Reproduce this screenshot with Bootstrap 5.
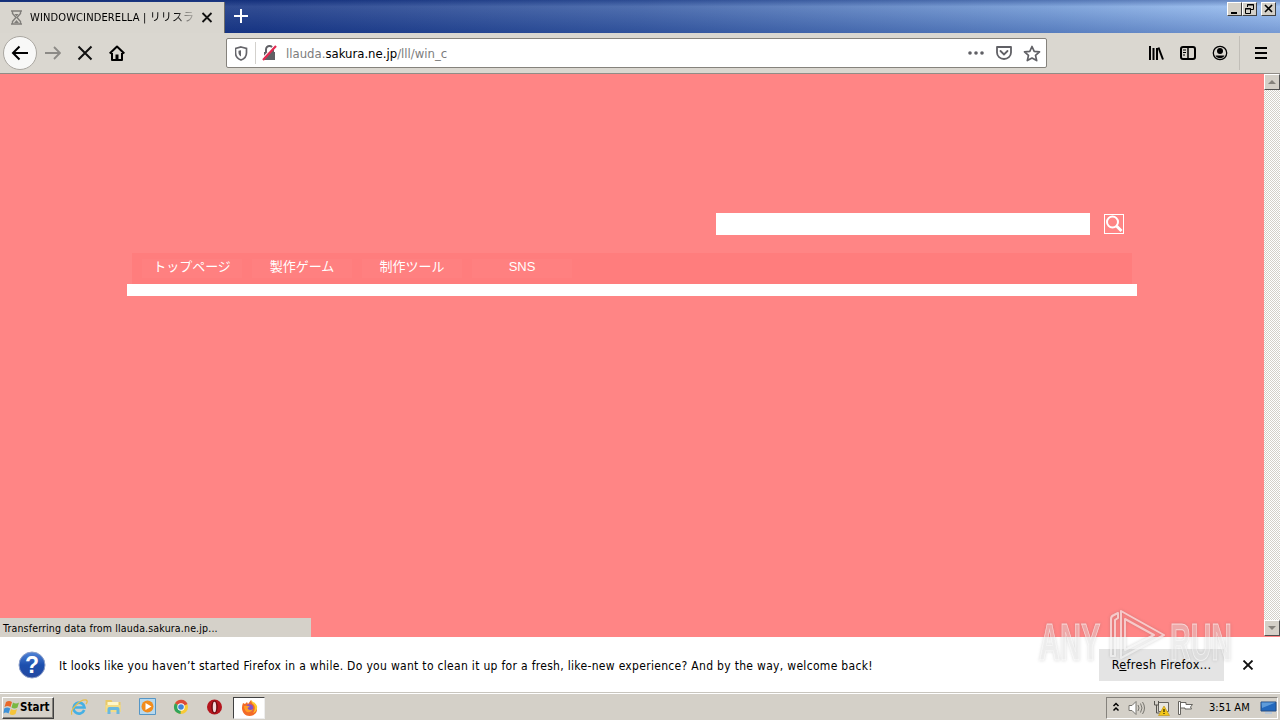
<!DOCTYPE html>
<html lang="ja">
<head>
    <meta charset="UTF-8">
    <title>WINDOWCINDERELLA</title>
    <meta name="viewport" content="width=device-width, initial-scale=1.0">
    <link href="https://cdn.jsdelivr.net/npm/bootstrap@5.3.0/dist/css/bootstrap.min.css" rel="stylesheet">
    <style>
        body {
            width: 1280px;
            height: 720px;
            overflow: hidden;
            font-family: "DejaVu Sans Condensed", "DejaVu Sans", "Noto Sans CJK JP", sans-serif;
            font-size: 12px;
            line-height: 1;
            color: #000;
            background: #d6d2ca;
        }

        svg {
            display: block;
            flex: none;
        }

        .text-line {
            white-space: nowrap;
            flex: none;
        }

        /* title bar */
        .title-strip {
            height: 33px;
            padding-top: 2px;
            background: linear-gradient(180deg, rgba(8, 30, 100, .3) 0, rgba(255, 255, 255, .1) 20%, rgba(10, 40, 120, .25) 100%), linear-gradient(90deg, #163480 0, #1a3886 20%, #3c5fa6 50%, #7199d5 82%, #9bc0f2 100%);
        }

        .browser-tab {
            width: 225px;
            height: 31px;
            padding-left: 10px;
            background: #d9d6cf;
            border-right: 1px solid #706e6a;
        }

        .tab-title {
            width: 167px;
            margin-left: 7px;
            font-size: 11px;
            letter-spacing: .13px;
            line-height: 16px;
            overflow: hidden;
            -webkit-mask-image: linear-gradient(90deg, #000 145px, transparent 168px);
            mask-image: linear-gradient(90deg, #000 145px, transparent 168px);
        }

        .win-btn {
            width: 15px;
            height: 14px;
            background: #d4d0c8;
            border: 1px solid;
            border-color: #fff #404040 #404040 #fff;
        }

        /* toolbar */
        .tool-strip {
            height: 41px;
            background: #dad7d0;
            border-bottom: 1px solid #908c86;
        }

        .back-btn {
            width: 34px;
            height: 34px;
            margin-left: 3px;
            border: 1px solid #aaa7a1;
            border-radius: 50%;
            background: #f8f8f7;
        }

        .url-box {
            width: 821px;
            height: 30px;
            margin-left: 101px;
            background: #fff;
            border: 1px solid #85827c;
            border-radius: 2px;
        }

        .url-sep {
            width: 1px;
            height: 22px;
            margin-left: 7px;
            background: #d3d1cd;
        }

        .url-text {
            margin-left: 6px;
            font-size: 13px;
            color: #7c7c7c;
        }

        .url-text b {
            font-weight: normal;
            color: #000;
        }

        .menu-sep {
            width: 1px;
            height: 34px;
            margin: 0 15px 0 11px;
            background: #c1beb8;
        }

        .menu-icon {
            margin-right: 13px;
        }

        /* page */
        .site {
            height: 563px;
            padding-bottom: 1px;
            background: #ff8585;
        }

        .site-inner {
            width: 1010px;
            padding-top: 139px;
        }

        .search-field {
            width: 374px;
            height: 22px;
            background: #fff;
        }

        .search-go {
            width: 20px;
            height: 20px;
            margin: 0 13px 0 14px;
            border: 1px solid #fff;
        }

        .site-menu {
            height: 31px;
            margin: 18px 5px 0;
            padding: 6px 10px 6px;
            gap: 10px;
            background: #ff7d7d;
        }

        .site-menu a {
            width: 100px;
            color: #fff;
            font-family: "Liberation Sans", "Noto Sans CJK JP", sans-serif;
            font-size: 13px;
            line-height: 15px;
            text-align: center;
            text-decoration: none;
            background: #ff8080;
        }

        .white-band {
            height: 12px;
            background: #fff;
        }

        .scroll-track {
            width: 16px;
            background: repeating-conic-gradient(#fff 0 25%, #d4d0c8 0 50%) 0 0 / 2px 2px;
        }

        .scroll-btn {
            width: 16px;
            height: 16px;
            background: #d4d0c8;
            border: 1px solid;
            border-color: #fff #505050 #505050 #fff;
        }

        .load-status {
            width: 311px;
            height: 19px;
            padding: 1px 0 0 3px;
            font-size: 10.5px;
            letter-spacing: .17px;
            background: #d5d1c9;
        }

        /* notification */
        .notice {
            height: 55px;
            padding: 0 24px 0 18px;
            background: #fff;
        }

        .notice-text {
            margin-left: 13px;
            padding-top: 2px;
            letter-spacing: .308px;
        }

        .notice-btn {
            width: 125px;
            height: 32px;
            padding-top: 1px;
            background: #e4e4e4;
            font-size: 12.5px;
            letter-spacing: .33px;
        }

        /* taskbar */
        .task-strip {
            height: 28px;
            border-top: 1px solid #c8c5be;
            background: linear-gradient(#fff 0 1px, #d4d0c8 1px);
        }

        .start-btn {
            width: 52px;
            height: 22px;
            margin: 2px 1px 0 2px;
            border: 1px solid;
            border-color: #fff #404040 #404040 #fff;
            box-shadow: inset -1px -1px #85827c;
            font-size: 11.5px;
            font-weight: bold;
        }

        .active-task {
            width: 32px;
            height: 22px;
            margin: 2px 0 0 10px;
            background: #fff;
            border: 1px solid;
            border-color: #404040 #eee #eee #404040;
        }

        .tray {
            width: 172px;
            height: 22px;
            margin: 2px 2px 0 0;
            padding-left: 5px;
            border: 1px solid;
            border-color: #85827c #fff #fff #85827c;
        }

        .tray-clock {
            margin-left: 14px;
            font-size: 11px;
        }

        .watermark {
            right: 40px;
            bottom: 50px;
            pointer-events: none;
            filter: drop-shadow(0 0 1.5px rgba(70, 70, 70, .4));
        }
    </style>
</head>
<body class="d-flex flex-column position-relative">
    <header class="title-strip d-flex">
        <div class="browser-tab d-flex align-items-center">
            <svg width="13" height="15" viewBox="0 0 13 15" fill="none" stroke="#807e7a" stroke-width="1.4">
                <path d="M1 1h11M1 14h11M2.500 1v2.500L6 7.500 2.500 11.500V14M10.500 1v2.500L7 7.500l3.500 4V14"/>
                <path d="M4.500 4h4L6.500 6.500zM4 13l2.500-3L9 13z" fill="#807e7a" stroke="none"/>
            </svg>
            <div class="tab-title text-line">WINDOWCINDERELLA | リリスラ</div>
            <svg class="ms-1" width="12" height="12" viewBox="0 0 12 12" stroke="#111" stroke-width="1.8"><path d="M1.500 1l9 9M10.500 1l-9 9"/></svg>
        </div>
        <svg class="mt-1 ms-2" width="16" height="18" viewBox="0 0 16 18" stroke="#fff" stroke-width="2"><path d="M8 3v14M1 10h14"/></svg>
        <div class="d-flex ms-auto me-1">
            <div class="win-btn"><svg width="13" height="12"><path d="M3 9h6v2H3z"/></svg></div>
            <div class="win-btn"><svg width="13" height="12" fill="none" stroke="#000"><path d="M4.500 4V1.500h6v5H8M4 2h7M2.500 5.500h5v5h-5zM2 6h6"/></svg></div>
            <div class="win-btn ms-1"><svg width="13" height="12" stroke="#000" stroke-width="1.600"><path d="M3 2l7 7M10 2L3 9"/></svg></div>
        </div>
    </header>

    <nav class="tool-strip d-flex align-items-center">
        <div class="back-btn d-flex align-items-center justify-content-center">
            <svg width="18" height="16" viewBox="0 0 18 16" fill="none" stroke="#000" stroke-width="2"><path d="M17 8H2M8.500 1.500L2 8l6.500 6.500"/></svg>
        </div>
        <svg class="ms-2" width="16" height="16" viewBox="0 0 16 16" fill="none" stroke="#8c8a86" stroke-width="1.800"><path d="M0 8h15M9 2l6 6-6 6"/></svg>
        <svg class="ms-3" width="16" height="16" viewBox="0 0 16 16" stroke="#111" stroke-width="2"><path d="M1.500 1.500l13 13M14.500 1.500l-13 13"/></svg>
        <svg class="ms-3" width="16" height="17" viewBox="0 0 16 17" fill="none" stroke="#000" stroke-width="2"><path d="M.7 8.500L8 1.500l7.300 7M3 8v7h10V8" stroke-linejoin="round"/><path d="M8 15V9.500" stroke-width="3"/></svg>
        <div class="url-box d-flex align-items-center">
            <svg class="ms-2" width="13" height="15" viewBox="0.5 0 13 15" fill="none" stroke="#65656a" stroke-width="1.700"><path d="M6.500 1L12 2.500v4.200c0 3.500-2 6-5.500 7.300C3 12.700 1 10.200 1 6.700V2.500z"/><path d="M6.500 4.200v6.300C4.800 9.500 4 8.200 4 6.500V4.800z" fill="#65656a" stroke="none"/></svg>
            <div class="url-sep"></div>
            <svg class="ms-1" width="20" height="18" viewBox="0 0 20 18" fill="none"><path d="M4 8h11v8H4z" fill="#606065"/><path d="M6 8V5.500a3.500 3.500 0 017 0V8" stroke="#606065" stroke-width="2"/><path d="M2 15L15 1" stroke="#fff" stroke-width="1.500"/><path d="M3 16L16 2" stroke="#e22850" stroke-width="2.200"/></svg>
            <div class="url-text text-line">llauda.<b>sakura.ne.jp</b>/lll/win_c</div>
            <svg class="ms-auto" width="16" height="4" fill="#606065"><circle cx="2" cy="2" r="1.800"/><circle cx="8" cy="2" r="1.800"/><circle cx="14" cy="2" r="1.800"/></svg>
            <svg class="ms-2 me-1" width="24" height="14" viewBox="-4 0 24 14" fill="none" stroke="#606065" stroke-width="1.800"><path d="M1 1h14v5.500a7 6.500 0 01-14 0z" stroke-linejoin="round"/><path d="M4.500 5L8 8.500 11.500 5" stroke-linecap="round"/></svg>
            <svg class="me-1" width="22" height="17" viewBox="-3 0 22 17" fill="none" stroke="#606065" stroke-width="1.700" stroke-linejoin="round"><path d="M9 1.500l2.200 4.800 5.300.6-4 3.500 1.200 5.200L9 13l-4.700 2.600 1.200-5.200-4-3.500 5.300-.6z"/></svg>
        </div>
        <div class="d-flex align-items-center ms-auto">
            <svg width="16" height="15" viewBox="0 0 16 15" stroke="#000" stroke-width="2"><path d="M2 0v14M5.500 2v12M9 2v12" /><path d="M10.500 1.500l4.500 12"/></svg>
            <svg class="ms-3" width="16" height="14" viewBox="0 0 16 14" fill="none" stroke="#000" stroke-width="2"><rect x="1" y="1" width="14" height="12" rx="2"/><path d="M8 1v12" stroke-width="1.500"/><path d="M3 4h3M3 6.500h3M3 9h2" stroke-width="1"/></svg>
            <svg class="ms-3" width="16" height="16" viewBox="0 0 16 16"><circle cx="8" cy="8" r="6.700" fill="none" stroke="#000" stroke-width="1.300"/><circle cx="8" cy="6" r="3"/><path d="M3.500 10.500h9C11 14 5 14 3.500 10.500z"/></svg>
            <div class="menu-sep"></div>
            <svg class="menu-icon" width="12" height="12" viewBox="0 0 12 12" stroke="#000" stroke-width="2"><path d="M0 1h12M0 6h12M0 11h12"/></svg>
        </div>
    </nav>

    <main class="site d-flex position-relative">
        <div class="flex-grow-1">
            <div class="site-inner mx-auto">
                <div class="d-flex justify-content-end align-items-center">
                    <div class="search-field"></div>
                    <div class="search-go"><svg width="18" height="18" viewBox="0 0 18 18" fill="none" stroke="#fff"><circle cx="7.500" cy="7" r="5.500" stroke-width="2"/><path d="M11.500 11l5 5" stroke-width="3"/></svg></div>
                </div>
                <div class="site-menu d-flex">
                    <a href="#">トップページ</a>
                    <a href="#">製作ゲーム</a>
                    <a href="#">制作ツール</a>
                    <a href="#">SNS</a>
                </div>
                <div class="white-band"></div>
            </div>
        </div>
        <div class="scroll-track d-flex flex-column justify-content-between">
            <div class="scroll-btn"><svg width="14" height="14" fill="#85827c"><path d="M3 9l4-4 4 4z"/></svg></div>
            <div class="scroll-btn"><svg width="14" height="14" fill="#85827c"><path d="M3 5l4 4 4-4z"/></svg></div>
        </div>
        <div class="load-status position-absolute bottom-0 start-0 d-flex align-items-center"><span class="text-line">Transferring data from llauda.sakura.ne.jp...</span></div>
    </main>

    <section class="notice d-flex align-items-center">
        <svg width="28" height="28" viewBox="0 0 28 28">
            <defs><linearGradient id="helpBlue" x2="0" y2="1"><stop stop-color="#5285d8"/><stop offset=".5" stop-color="#1c4fae"/><stop offset="1" stop-color="#2448a0"/></linearGradient></defs>
            <circle cx="14" cy="14" r="13" fill="url(#helpBlue)" stroke="#8c9ec8"/>
            <text x="14" y="22" text-anchor="middle" fill="#fff" font-family="Liberation Sans" font-weight="bold" font-size="23">?</text>
        </svg>
        <span class="notice-text text-line">It looks like you haven’t started Firefox in a while. Do you want to clean it up for a fresh, like-new experience? And by the way, welcome back!</span>
        <div class="notice-btn d-flex align-items-center justify-content-center ms-auto"><span class="text-line">R<u>e</u>fresh Firefox...</span></div>
        <svg class="ms-3" width="16" height="10" viewBox="-3 0 16 10" stroke="#111" stroke-width="1.800"><path d="M.5.5l9 9M9.500.5l-9 9"/></svg>
    </section>

    <footer class="task-strip d-flex align-items-center">
        <div class="start-btn d-flex align-items-center">
            <svg width="17" height="16" viewBox="0 0 17 16"><path d="M3 2q3-2 6 0L7.500 7q-3-2-6 0z" fill="#e8692a"/><path d="M10 2.500q3 2 6 0L14.500 7.500q-3 2-6 0z" fill="#79b843"/><path d="M1.200 8.500q3-2 6 0L5.500 13.500q-3-2-5 0z" fill="#3e92d8"/><path d="M8 9q3 2 6 0l-1.500 5q-3 2-6 0z" fill="#f5c43a"/></svg>
            <span class="text-line">Start</span>
        </div>
        <!-- Internet Explorer -->
        <svg class="ms-3" width="18" height="18" viewBox="1 0 18 18" fill="none"><path d="M14.200 12A5.500 5.500 0 1114.500 9.500H5" stroke="#45b0e4" stroke-width="2.600"/><path d="M2 16.500C-1 13 10 1 16 2c2 .5 1 3 0 4" stroke="#e5bd4c" stroke-width="1.300"/></svg>
        <!-- Explorer -->
        <svg class="ms-3" width="18" height="17" viewBox="0.5 0 18 17"><path d="M1 2h6l1 2h8v10H1z" fill="#e9c967"/><path d="M3 4h11v4H3z" fill="#fff7c8"/><path d="M1 7h15v7H1z" fill="#f3dc86"/><path d="M3 16v-5q0-2 2-2h8q2 0 2 2v5h-3v-4H6v4z" fill="#69b8df"/></svg>
        <!-- Media player -->
        <svg class="ms-3" width="17" height="17" viewBox="0 0 17 17"><path d="M.5.500h16v16H.5z" fill="#b7d8ed" stroke="#5596c6"/><circle cx="8.500" cy="8.500" r="6" fill="#f28c1c"/><path d="M6.500 5l6 3.500-6 3.500z" fill="#fff"/></svg>
        <!-- Chrome -->
        <svg class="ms-3" width="17" height="16" viewBox="-1 0 17 16"><circle cx="8" cy="8" r="7" fill="#f8ca36"/><path d="M8 8L2 4.300A7 7 0 0114.500 5z" fill="#dd4b39"/><path d="M8 8L2 4.300A7 7 0 007.500 15z" fill="#31a45b"/><circle cx="8" cy="8" r="3.700" fill="#fff"/><circle cx="8" cy="8" r="2.800" fill="#4285d8"/></svg>
        <!-- Opera -->
        <svg class="ms-3" width="18" height="16" viewBox="-1.5 0 18 16"><circle cx="8" cy="8" r="7.500" fill="#b5151d"/><ellipse cx="8" cy="8" rx="3.200" ry="6.500" fill="#6d0c11"/><ellipse cx="8" cy="8" rx="1.700" ry="5.300" fill="#f3dada"/></svg>
        <!-- Firefox -->
        <div class="active-task d-flex align-items-center justify-content-center">
            <svg width="17" height="17" viewBox="0 0 17 17"><path d="M2 4l2 1 2-2 1 2 3-4q1 3 4 5c5 5 0 11-5.500 11S-1 11 2 4z" fill="#f36b27"/><path d="M10 1q0 3 3 5 2 4-1 8 5-2 4-7-1-3-4-4z" fill="#ffc72b"/><circle cx="8.500" cy="9" r="3.700" fill="#8352c9"/><path d="M3 7q4-1 6 1-3 0-2 2 2 2 5 0-2 4-6 3-3-2-3-6z" fill="#ff9d26"/></svg>
        </div>
        <div class="tray d-flex align-items-center ms-auto">
            <svg width="8" height="12" viewBox="0 1 8 12" fill="none" stroke="#000" stroke-width="1.500"><path d="M1.500 5L4 2.500 6.500 5M1.500 9.500L4 7l2.500 2.500"/></svg>
            <svg class="ms-2" width="18" height="16" viewBox="0 0 18 16" fill="#fff" stroke="#77756f"><path d="M1 5.500h3L8 1.500v13l-4-4H1z"/><path d="M10 5q2 3 0 6M12.500 3.500q3 4.500 0 9M14.500 2q4 6 0 12" fill="none"/></svg>
            <svg class="ms-2" width="17" height="16" viewBox="1 0 17 16"><path d="M5.500 2.500h10v9h-10z" fill="#e8e6df" stroke="#66645f"/><path d="M1.500 1v4h4V1M3.500 5v8h3" fill="none" stroke="#55534e"/><path d="M11 6l5.500 9.500h-11z" fill="#f3c719" stroke="#b88d10" stroke-width=".6"/><path d="M10.500 9h1v3h-1zM10.500 13h1v1h-1z"/></svg>
            <svg class="ms-2" width="16" height="16" viewBox="2 0 16 16" overflow="visible" fill="#fff" stroke="#66645f"><path d="M1.500 1.500h2v13h-2zM3.500 2.500H9v2h6.500l-2 2.500 1 2H8V8H3.500z"/></svg>
            <span class="tray-clock text-line">3:51 AM</span>
            <svg class="ms-auto" width="17" height="15" viewBox="0 0 17 15"><path d="M1 2h15v9H1z" fill="#2368bd" stroke="#244c83"/><path d="M1.500 2.500h14L2 8z" fill="#5e9bda"/><path d="M5 12h7v2H5z" fill="#b8c8da"/></svg>
        </div>
    </footer>

    <svg class="watermark position-absolute" width="206" height="64" viewBox="0 0 206 64" overflow="visible">
        <g fill="#fff" fill-opacity=".35" stroke="#fff" stroke-opacity=".6" font-family="Liberation Sans" font-weight="bold" font-size="52">
            <text transform="translate(5 54) scale(.56 1)">ANY</text>
            <text transform="translate(136 54) scale(.55 1)">RUN</text>
        </g>
        <g fill="none" stroke="#fff" stroke-opacity=".6" stroke-width="2" stroke-linejoin="round">
            <path d="M77 50V13q0-3 3-4l4-2v5l-3 2v36zM87 5v47l43-23zM91 13v31l29-15z"/>
        </g>
    </svg>
    <script src="https://cdn.jsdelivr.net/npm/bootstrap@5.3.0/dist/js/bootstrap.bundle.min.js"></script>
</body>
</html>
